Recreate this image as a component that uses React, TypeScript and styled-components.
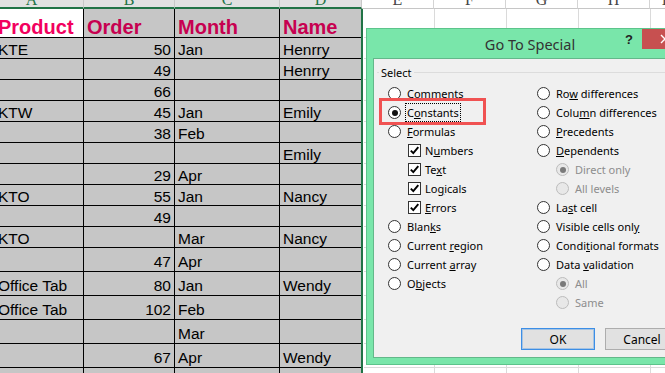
import styled, { createGlobalStyle } from "styled-components";

const GlobalStyle = createGlobalStyle`
  html, body { margin: 0; padding: 0; background: #fff; overflow: hidden; }
  #root { width: 665px; height: 373px; }
`;

const Page = styled.div`
  position: relative;
  width: 665px;
  height: 373px;
  overflow: hidden;
  background: #fff;
  font-family: "Liberation Sans", Arial, sans-serif;
`;

/* ---------- column letters ---------- */
const HeaderStrip = styled.div`
  display: flex;
  height: 9px;
  overflow: hidden;
`;

const ColHead = styled.div<{ $w: number; $sel?: boolean; $shift?: number }>`
  flex: 0 0 ${(p) => p.$w}px;
  box-sizing: border-box;
  height: 9px;
  overflow: hidden;
  background: ${(p) => (p.$sel ? "#e1e1e1" : "#fff")};
  border-right: 1px solid ${(p) => (p.$sel ? "#c8c8c8" : "#d4d4d4")};
  border-bottom: ${(p) => (p.$sel ? "2px solid #217346" : "1px solid #c6c6c6")};
  color: ${(p) => (p.$sel ? "#217346" : "#444")};
  font-family: "Liberation Serif", serif;
  font-size: 16px;
  line-height: 16px;
  text-align: center;
  padding-right: ${(p) => p.$shift ?? 0}px;

  span {
    display: block;
    margin-top: -8px;
  }
`;

/* ---------- sheet ---------- */
const Sheet = styled.div`
  display: flex;
`;

const Selection = styled.div`
  display: flex;
  flex-direction: column;
  border-right: 2px solid #217346;
`;

const Row = styled.div<{ $h: number }>`
  display: flex;
  box-sizing: border-box;
  height: ${(p) => p.$h}px;
  border-bottom: 1px solid #000;
`;

const Cell = styled.div<{
  $w: number;
  $right?: boolean;
  $white?: boolean;
  $pl?: number;
  $pb?: number;
  $last?: boolean;
}>`
  flex: 0 0 ${(p) => p.$w}px;
  box-sizing: border-box;
  display: flex;
  align-items: flex-end;
  justify-content: ${(p) => (p.$right ? "flex-end" : "flex-start")};
  background: ${(p) => (p.$white ? "#fff" : "#c6c6c6")};
  border-right: ${(p) => (p.$last ? "none" : "1px solid #000")};
  padding: 0 3px ${(p) => p.$pb ?? 0}px ${(p) => p.$pl ?? 3}px;
  white-space: nowrap;
  color: #000;
  font-size: 15.5px;
  line-height: 15px;
`;

const HeadText = styled.span<{ $bright?: boolean }>`
  font-weight: 700;
  font-size: 20px;
  line-height: 20px;
  color: ${(p) => (p.$bright ? "#f2005e" : "#c70050")};
`;

const FirstColText = styled.span`
  margin-left: -2px;
`;

const EmptyGrid = styled.div`
  display: flex;
  flex-direction: column;
  margin-left: 1px;
`;

const GridRow = styled.div<{ $h: number }>`
  display: flex;
  box-sizing: border-box;
  height: ${(p) => p.$h}px;
  border-bottom: 1px solid #dadada;
`;

const GridCell = styled.div<{ $w: number }>`
  flex: 0 0 ${(p) => p.$w}px;
  box-sizing: border-box;
  border-right: 1px solid #dadada;
`;

/* ---------- dialog ---------- */
const Dialog = styled.div`
  position: absolute;
  left: 366px;
  top: 28px;
  width: 328px;
  height: 337px;
  box-sizing: border-box;
  display: flex;
  flex-direction: column;
  padding: 0 6px 6px;
  background: #79e6aa;
  border: 1px solid #5cc48b;
  font-family: "Noto Sans", "Open Sans", sans-serif;
`;

const TitleBar = styled.div`
  position: relative;
  flex: 0 0 29px;
  margin: 0 -6px;
  display: flex;
  align-items: center;
  justify-content: center;
  font-size: 14.5px;
  color: #333;
`;

const TitleControls = styled.div`
  position: absolute;
  right: 5px;
  top: 0;
  display: flex;
`;

const HelpButton = styled.div`
  width: 26px;
  height: 20px;
  display: flex;
  align-items: center;
  justify-content: center;
  font-family: "Liberation Sans", Arial, sans-serif;
  font-weight: 700;
  font-size: 13px;
  color: #222;
`;

const CloseButton = styled.div`
  width: 46px;
  height: 20px;
  display: flex;
  align-items: center;
  justify-content: center;
  background: #c75050;
`;

const Panel = styled.div`
  flex: 1;
  display: flex;
  flex-direction: column;
  background: #f0f0f0;
  border: 1px solid #63b88a;
  font-size: 11px;
  color: #000;
`;

const GroupBox = styled.fieldset`
  margin: 6px 0 0 3px;
  padding: 0;
  border: none;
  border-top: 1px solid #dcdcdc;
  min-width: 0;
`;

const GroupLegend = styled.legend`
  margin-left: 2px;
  padding: 0 2px;
  line-height: 15px;
`;

const OptionColumns = styled.div`
  display: flex;
  padding: 4px 0 0 11px;
`;

const OptionColumn = styled.div<{ $w?: number }>`
  display: flex;
  flex-direction: column;
  flex: 0 0 ${(p) => (p.$w ? `${p.$w}px` : "auto")};
`;

const Option = styled.div<{ $indent?: number; $disabled?: boolean }>`
  height: 19px;
  display: flex;
  align-items: center;
  gap: 6px;
  padding-left: ${(p) => p.$indent ?? 0}px;
  white-space: nowrap;
  color: ${(p) => (p.$disabled ? "#8d8d8d" : "#000")};
`;

const RadioCircle = styled.span<{ $checked?: boolean; $disabled?: boolean }>`
  flex: 0 0 13px;
  width: 13px;
  height: 13px;
  box-sizing: border-box;
  border-radius: 50%;
  border: 1px solid ${(p) => (p.$disabled ? "#bcbcbc" : "#333")};
  background: ${(p) => (p.$disabled ? "#e8e8e8" : "#fff")};
  display: flex;
  align-items: center;
  justify-content: center;

  &::after {
    content: "";
    display: ${(p) => (p.$checked ? "block" : "none")};
    width: 6px;
    height: 6px;
    border-radius: 50%;
    background: ${(p) => (p.$disabled ? "#7a7a7a" : "#111")};
  }
`;

const CheckSquare = styled.span`
  flex: 0 0 13px;
  width: 13px;
  height: 13px;
  box-sizing: border-box;
  border: 1px solid #333;
  background: #fff;
  display: flex;
  align-items: center;
  justify-content: center;
  margin-right: -2px;
`;

const LabelText = styled.span<{ $focus?: boolean }>`
  ${(p) =>
    p.$focus
      ? `outline: 1px dotted #000; outline-offset: 1px;`
      : ""}
`;

const ButtonRow = styled.div`
  margin-top: auto;
  display: flex;
  justify-content: flex-end;
  gap: 10px;
  padding: 0 7px 7px 0;
`;

const DialogButton = styled.div<{ $default?: boolean }>`
  width: 74px;
  height: 22px;
  box-sizing: border-box;
  display: flex;
  align-items: center;
  justify-content: center;
  background: #e1e1e1;
  border: 1px solid ${(p) => (p.$default ? "#3c8ee6" : "#adadad")};
  box-shadow: ${(p) => (p.$default ? "inset 0 0 0 1px rgba(60,142,230,0.35)" : "none")};
  font-size: 12px;
  color: #000;
`;

const Highlight = styled.div`
  position: absolute;
  left: 379px;
  top: 98px;
  width: 107px;
  height: 27px;
  box-sizing: border-box;
  border: 3px solid #f05252;
`;

/* ---------- data ---------- */
const headCols = [
  { letter: "A", w: 84, sel: true, shift: 20 },
  { letter: "B", w: 91, sel: true },
  { letter: "C", w: 105, sel: true },
  { letter: "D", w: 82, sel: true },
  { letter: "E", w: 72 },
  { letter: "F", w: 72 },
  { letter: "G", w: 72 },
  { letter: "H", w: 72 },
  { letter: "I", w: 30 },
];

const widths = [84, 91, 105, 81];

const data: { h: number; c: string[] }[] = [
  { h: 21, c: ["KTE", "50", "Jan", "Henrry"] },
  { h: 21, c: ["", "49", "", "Henrry"] },
  { h: 21, c: ["", "66", "", ""] },
  { h: 21, c: ["KTW", "45", "Jan", "Emily"] },
  { h: 21, c: ["", "38", "Feb", ""] },
  { h: 21, c: ["", "", "", "Emily"] },
  { h: 21, c: ["", "29", "Apr", ""] },
  { h: 21, c: ["KTO", "55", "Jan", "Nancy"] },
  { h: 21, c: ["", "49", "", ""] },
  { h: 21, c: ["KTO", "", "Mar", "Nancy"] },
  { h: 24, c: ["", "47", "Apr", ""] },
  { h: 24, c: ["Office Tab", "80", "Jan", "Wendy"] },
  { h: 24, c: ["Office Tab", "102", "Feb", ""] },
  { h: 24, c: ["", "", "Mar", ""] },
  { h: 24, c: ["", "67", "Apr", "Wendy"] },
  { h: 24, c: ["", "", "", ""] },
];

const gridHeights = [29, ...data.map((r) => r.h)];

type Opt = {
  kind: "radio" | "check";
  label: [string, string, string];
  checked?: boolean;
  disabled?: boolean;
  indent?: number;
  focus?: boolean;
};

const leftOpts: Opt[] = [
  { kind: "radio", label: ["", "C", "omments"] },
  { kind: "radio", label: ["C", "o", "nstants"], checked: true, focus: true },
  { kind: "radio", label: ["", "F", "ormulas"] },
  { kind: "check", label: ["N", "u", "mbers"], checked: true, indent: 20 },
  { kind: "check", label: ["Te", "x", "t"], checked: true, indent: 20 },
  { kind: "check", label: ["Lo", "g", "icals"], checked: true, indent: 20 },
  { kind: "check", label: ["", "E", "rrors"], checked: true, indent: 20 },
  { kind: "radio", label: ["Blan", "k", "s"] },
  { kind: "radio", label: ["Current ", "r", "egion"] },
  { kind: "radio", label: ["Current ", "a", "rray"] },
  { kind: "radio", label: ["O", "b", "jects"] },
];

const rightOpts: Opt[] = [
  { kind: "radio", label: ["Ro", "w", " differences"] },
  { kind: "radio", label: ["Colu", "m", "n differences"] },
  { kind: "radio", label: ["", "P", "recedents"] },
  { kind: "radio", label: ["", "D", "ependents"] },
  { kind: "radio", label: ["Direct only", "", ""], checked: true, disabled: true, indent: 19 },
  { kind: "radio", label: ["All levels", "", ""], disabled: true, indent: 19 },
  { kind: "radio", label: ["La", "s", "t cell"] },
  { kind: "radio", label: ["Visible cells onl", "y", ""] },
  { kind: "radio", label: ["Condi", "t", "ional formats"] },
  { kind: "radio", label: ["Data ", "v", "alidation"] },
  { kind: "radio", label: ["All", "", ""], checked: true, disabled: true, indent: 19 },
  { kind: "radio", label: ["Same", "", ""], disabled: true, indent: 19 },
];

function CheckMark() {
  return (
    <svg width="11" height="11" viewBox="0 0 11 11">
      <path d="M1.8 5.6 L4.3 8.2 L9.3 2.2" fill="none" stroke="#000" strokeWidth="1.9" />
    </svg>
  );
}

function CloseIcon() {
  return (
    <svg width="10" height="10" viewBox="0 0 10 10">
      <path d="M1 1 L9 9 M9 1 L1 9" stroke="#fff" strokeWidth="1.4" />
    </svg>
  );
}

function OptionItem({ o }: { o: Opt }) {
  const [a, k, b] = o.label;
  return (
    <Option $indent={o.indent} $disabled={o.disabled}>
      {o.kind === "radio" ? (
        <RadioCircle $checked={o.checked} $disabled={o.disabled} />
      ) : (
        <CheckSquare>{o.checked && <CheckMark />}</CheckSquare>
      )}
      <LabelText $focus={o.focus}>
        {a}
        {k && <u>{k}</u>}
        {b}
      </LabelText>
    </Option>
  );
}

export default function App() {
  return (
    <>
      <GlobalStyle />
      <Page>
        <HeaderStrip>
          {headCols.map((c) => (
            <ColHead key={c.letter} $w={c.w} $sel={c.sel} $shift={c.shift}>
              <span>{c.letter}</span>
            </ColHead>
          ))}
        </HeaderStrip>

        <Sheet>
          <Selection>
            <Row $h={29}>
              <Cell $w={widths[0]} $white $pl={0}>
                <FirstColText>
                  <HeadText $bright>Product</HeadText>
                </FirstColText>
              </Cell>
              <Cell $w={widths[1]}>
                <HeadText>Order</HeadText>
              </Cell>
              <Cell $w={widths[2]}>
                <HeadText>Month</HeadText>
              </Cell>
              <Cell $w={widths[3]} $last>
                <HeadText>Name</HeadText>
              </Cell>
            </Row>
            {data.map((r, i) => {
              const pb = r.h > 21 ? 2 : 1;
              return (
                <Row key={i} $h={r.h}>
                  <Cell $w={widths[0]} $pl={0} $pb={pb}>
                    <FirstColText>{r.c[0]}</FirstColText>
                  </Cell>
                  <Cell $w={widths[1]} $right $pb={pb}>
                    {r.c[1]}
                  </Cell>
                  <Cell $w={widths[2]} $pb={pb}>
                    {r.c[2]}
                  </Cell>
                  <Cell $w={widths[3]} $pb={pb} $last>
                    {r.c[3]}
                  </Cell>
                </Row>
              );
            })}
          </Selection>

          <EmptyGrid>
            {gridHeights.map((h, i) => (
              <GridRow key={i} $h={h}>
                {[71, 72, 72, 72, 20].map((w, j) => (
                  <GridCell key={j} $w={w} />
                ))}
              </GridRow>
            ))}
          </EmptyGrid>
        </Sheet>

        <Dialog>
          <TitleBar>
            Go To Special
            <TitleControls>
              <HelpButton>?</HelpButton>
              <CloseButton>
                <CloseIcon />
              </CloseButton>
            </TitleControls>
          </TitleBar>
          <Panel>
            <GroupBox>
              <GroupLegend>Select</GroupLegend>
              <OptionColumns>
                <OptionColumn $w={149}>
                  {leftOpts.map((o, i) => (
                    <OptionItem key={i} o={o} />
                  ))}
                </OptionColumn>
                <OptionColumn>
                  {rightOpts.map((o, i) => (
                    <OptionItem key={i} o={o} />
                  ))}
                </OptionColumn>
              </OptionColumns>
            </GroupBox>
            <ButtonRow>
              <DialogButton $default>OK</DialogButton>
              <DialogButton>Cancel</DialogButton>
            </ButtonRow>
          </Panel>
        </Dialog>

        <Highlight />
      </Page>
    </>
  );
}
